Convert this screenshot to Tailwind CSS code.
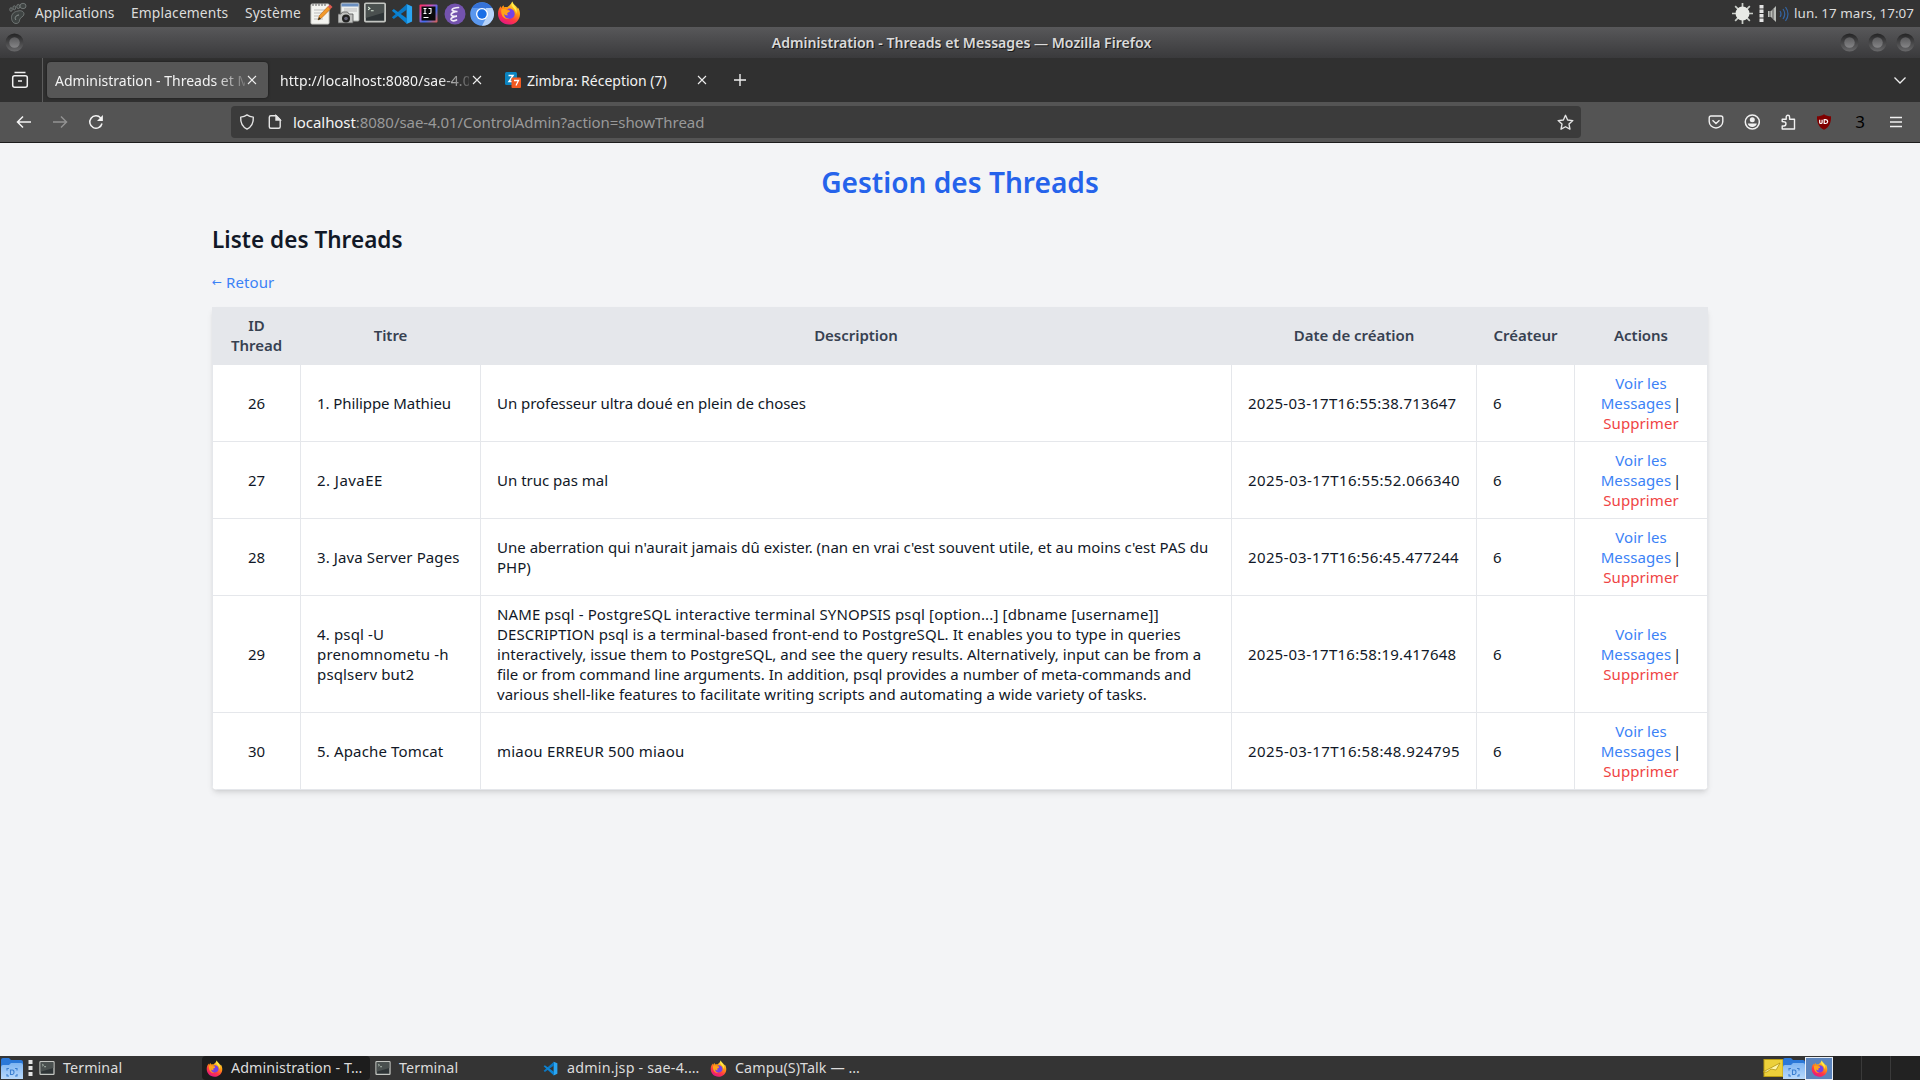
<!DOCTYPE html>
<html lang="fr">
<head>
<meta charset="utf-8">
<title>Administration - Threads et Messages</title>
<script src="https://cdn.jsdelivr.net/npm/@tailwindcss/browser@4"></script>
</head>
<body class="w-[1920px] h-[1080px] overflow-hidden flex flex-col bg-[#f3f4f6] font-['Noto_Sans',sans-serif]">

<svg width="0" height="0" class="absolute">
  <defs>
    <linearGradient id="ffg" x1=".8" y1="0" x2=".3" y2="1"><stop offset="0" stop-color="#fff44f"/><stop offset=".4" stop-color="#ff980e"/><stop offset=".7" stop-color="#ff3647"/><stop offset="1" stop-color="#e31587"/></linearGradient>
    <linearGradient id="ringg" x1="0" y1="0" x2="0" y2="1"><stop offset="0" stop-color="#232324"/><stop offset="1" stop-color="#68686a"/></linearGradient>
    <linearGradient id="dotg" x1="0" y1="0" x2="0" y2="1"><stop offset="0" stop-color="#5a5a5c"/><stop offset="1" stop-color="#858587"/></linearGradient>
    <linearGradient id="ijg" x1="0" y1="0" x2="1" y2="1"><stop offset="0" stop-color="#fe2857"/><stop offset=".35" stop-color="#c757bc"/><stop offset=".6" stop-color="#3b6cf4"/><stop offset="1" stop-color="#e8604c"/></linearGradient>
    <linearGradient id="foldg" x1="0" y1="0" x2="0" y2="1"><stop offset="0" stop-color="#7fb5f2"/><stop offset="1" stop-color="#b9d9fb"/></linearGradient>
  </defs>
  <symbol id="firefox" viewBox="0 0 24 24">
    <path d="M15.2.6c.6 1.6 1.500 2.600 3 3.900 1.300 1.100 1.900 2.100 2.100 3.200.300-.4.400-.9.400-1.400 1.600 2 2.300 4.300 2.300 6.600C23 19 18.200 23.600 12 23.600S1 19 1 12.800C1 9.800 2 7 3.800 5c0 .9.200 1.600.500 2 .500-1.200 1.300-2.200 2.300-2.800 0 .8.200 1.500.6 2 .9-.3 2-.3 2.900 0C11.400 5.300 14.200 3.800 15.200.6z" fill="url(#ffg)"/>
    <path d="M12.300 7.500c3 0 5.400 2.300 5.400 5.200s-2.400 5.100-5.400 5.100-5.500-2-5.500-4.800c0-1 .300-1.800.9-2.600 1 .7 2.100.9 3.300.5 1-.3 1.900-.8 1.700-1.300-.2-.5-1.500-.4-2.400-1 .5-.7 1.200-1.100 2-1.100z" fill="#7542e5"/>
    <path d="M4.300 8.300c1.900-.9 3.900-.6 5.200.6 1 .9 3.200.5 3.300 1.200.1.900-1.700 1.300-2.300 1.800-.6.500-.4 1.700.7 2.100-1.300.7-3.300.3-3.900-.9-.4 3 2.100 4.700 4.700 4.700-4.500 1-8.500-2.500-7.700-9.500z" fill="#ffa31a"/>
    <path d="M15.200.6c-1.100 2.500-.5 4.500 1.300 6.300 1.900 1.900 2.800 3.700 2.400 6.300 1.300-2.600.7-5-.4-6.700-1-1.600-2.900-2.900-3.300-5.900z" fill="#fff04a"/>
  </symbol>
  <symbol id="vscode" viewBox="0 0 24 24">
    <path d="M17 1l6 2.700v16.600L17 23z" fill="#2aa5f2"/>
    <path d="M17.500 1 1 15.500l2 1.900L17.500 7z" fill="#0b78c4"/><path d="M17.500 23 1 8.500l2-1.900L17.500 17z" fill="#0b83d3"/>
  </symbol>
  <symbol id="term" viewBox="0 0 24 22">
    <rect x="1" y="1" width="22" height="20" rx="1" fill="#2e3436" stroke="#c3c5c1" stroke-width="2"/>
    <path d="M2 2h20v9L2 17z" fill="#4a504f"/><path d="M4.500 5l2 1.500-2 1.500M7.500 9h3" stroke="#d8e8d8" stroke-width="1.100" fill="none"/>
  </symbol>
  <symbol id="folder" viewBox="0 0 22 23">
    <path d="M0 3q0-2 2-2h6l2 2h10q2 0 2 2v14H0z" fill="#2b78d8"/><path d="M0 10q0-2 2-2h6l2-2h10q2 0 2 2v14H0z" fill="url(#foldg)"/>
    <path d="M6 13.500v-2h2M14 11.500h2v2M16 17v2h-2M8 19H6v-2M9.500 13h2q1.500 0 1.500 2.200t-1.500 2.300h-2z" stroke="#3b7fd0" stroke-width="1.100" fill="none"/>
  </symbol>
  <symbol id="ring" viewBox="0 0 20 20"><circle cx="10" cy="10" r="9.500" fill="url(#ringg)"/><circle cx="10" cy="10" r="5.500" fill="url(#dotg)"/></symbol>
  <symbol id="x" viewBox="0 0 10 10"><path d="M1 1l8 8M9 1L1 9" stroke="#eee" stroke-width="1.100" fill="none"/></symbol>
</svg>

<!-- Desktop panel -->
<div class="h-[27px] shrink-0 bg-[#343434] flex items-center text-[#dcdcdc] text-[13.8px]">
  <svg class="w-[18px] h-[23px] ml-[9px]" viewBox="0 0 18 23"><g fill="#3f4443" stroke="#7b8280" stroke-width=".8"><path d="M9 9c3-1 6 .5 6 3 0 3-4 3-4.500 6 0 2-1 3.500-3.500 3.500-3 0-4.500-3-4.500-6C2.500 12 5 9.500 9 9z"/><ellipse cx="2" cy="7.500" rx="1.300" ry="1.800"/><ellipse cx="5.300" cy="5.800" rx="1.400" ry="2"/><ellipse cx="9.300" cy="4.500" rx="1.600" ry="2.100"/><ellipse cx="14" cy="4" rx="3" ry="2.700"/></g><path d="M7 18c-2-2 0-5 3-5" stroke="#8d9492" fill="none"/></svg>
  <span class="ml-2 w-[96px] shrink-0">Applications</span>
  <span class="w-[114px] shrink-0 tracking-[0.15px]">Emplacements</span>
  <span class="w-[65px] shrink-0 tracking-[0.2px]">Système</span>
  <svg class="w-[23px] h-[23px]" viewBox="0 0 23 23"><rect x="1" y="2" width="18" height="20" rx="1" fill="#f4f4f0" stroke="#c9c9c5"/><path d="M3 1v3M6 1v3M9 1v3M12 1v3M15 1v3" stroke="#777" stroke-width="1.200"/><path d="M4 8h11M4 11h9M4 14h6M4 17h9" stroke="#bbb"/><path d="M8 18l1.500-4.500 8.500-9 2.500 2.500-9 9z" fill="#f39a2b" stroke="#b05d10" stroke-width=".6"/><path d="M18 4.500l2-2 2.500 2.500-2 2z" fill="#e05a50"/><path d="M8 18l1-3 2 2z" fill="#332"/></svg>
  <svg class="w-[22px] h-[23px] ml-[5px]" viewBox="0 0 22 23"><rect x="3" y="1" width="18" height="18" rx="1" fill="#eceeec" stroke="#a9aca8"/><path d="M3.500 1.500h17v3h-17z" fill="#6a8fc0"/><path d="M6 7h13M6 9h13" stroke="#bbb"/><path d="M0 12h3l1.500-2h5l1.500 2h4v9H0z" fill="#bfc0be" stroke="#555" stroke-width=".8"/><circle cx="8" cy="16.500" r="4" fill="#222"/><circle cx="8" cy="16.500" r="1.800" fill="#667"/></svg>
  <svg class="w-[22px] h-[21px] ml-1 -mt-[2px]"><use href="#term"/></svg>
  <svg class="w-[22px] h-[22px] ml-[5px]"><use href="#vscode"/></svg>
  <svg class="w-[19px] h-[19px] ml-[6px]" viewBox="0 0 19 19"><rect x=".500" y=".500" width="18" height="18" rx="1" fill="url(#ijg)"/><rect x="2.500" y="2.500" width="14" height="14" fill="#0a0a0c"/><path d="M4.500 4.500h3M6 4.500v5M4.500 9.500h3M9.500 4.500h3M12 4.500v4q0 1-1.300 1h-1M4.500 13.500h5" stroke="#fff" stroke-width="1.100" fill="none"/></svg>
  <svg class="w-[22px] h-[22px] ml-[6px]" viewBox="0 0 22 22"><circle cx="11" cy="11" r="10.500" fill="#7453ae"/><path d="M14.500 4.500c-3 0-7 1-6.300 2.700.7 1.500 4 1.300 5.300 1.300-3 0-6.500 1.300-6.300 3.200.3 1.800 4 1.700 5.800 1.500-3 .5-6.500 1.500-6 3.300.7 1.500 3.500 1.300 5.500.5" fill="none" stroke="#f1ecf8" stroke-width="1.700" stroke-linecap="round"/></svg>
  <svg class="w-6 h-6 ml-[4px]" viewBox="0 0 24 24"><circle cx="12" cy="12" r="11.800" fill="#5a97ee"/><path d="M1.800 6A11.800 11.800 0 0 1 22.200 6H12z" fill="#3572d8"/><path d="M22.300 6A11.800 11.800 0 0 1 12 23.800l5-9.500L16 6z" fill="#b7d3fa"/><circle cx="12" cy="12" r="6" fill="#fff"/><circle cx="12" cy="12" r="4.700" fill="#1a6ee6"/></svg>
  <svg class="w-[24px] h-[24px] ml-[3px] -mt-px"><use href="#firefox"/></svg>
  <div class="ml-auto flex items-center">
    <svg class="w-[21px] h-[21px]" viewBox="0 0 22 22"><path d="M11 0v22M0 11h22M3.300 3.300l15.400 15.400M18.700 3.300L3.300 18.700" stroke="#c9cdc8" stroke-width="1.800"/><circle cx="11" cy="11" r="7.300" fill="#e8eae6"/></svg>
    <svg class="w-[5px] h-[17px] ml-[6px]" viewBox="0 0 5 17"><path d="M.500 0h4v3.500h-4zM.500 4.500h4V8h-4zM.500 9h4v3.500h-4zM.500 13.500h4V17h-4z" fill="#e4e4e4"/></svg>
    <svg class="w-[22px] h-[18px] ml-[3px]" viewBox="0 0 22 18"><path d="M1 6h3l5-5v16l-5-5H1z" fill="#b9bcb8"/><path d="M3 6v6M6 4v10" stroke="#555"/><path d="M13 6q2 3 0 6M16 4q3.500 5 0 10M18.500 2q5 7 0 14" stroke="#3465a4" stroke-width="1.200" fill="none"/></svg>
    <span class="ml-[5px] mr-[6px] text-[13.4px] tracking-[0.04px] whitespace-nowrap">lun. 17 mars, 17:07</span>
  </div>
</div>

<!-- Window title bar -->
<div class="h-[31px] shrink-0 bg-linear-to-b from-[#58585a] to-[#3a3a3c] flex items-center justify-between px-[5px] text-[#dadada]">
  <svg class="w-[19px] h-[19px] mr-[59px]"><use href="#ring"/></svg>
  <span class="text-[14.1px] font-semibold text-shadow-[1px_1px_0_#1a1a1a]">Administration - Threads et Messages — Mozilla Firefox</span>
  <div class="flex gap-[9px]"><svg class="w-[19px] h-[19px]"><use href="#ring"/></svg><svg class="w-[19px] h-[19px]"><use href="#ring"/></svg><svg class="w-[19px] h-[19px]"><use href="#ring"/></svg></div>
</div>

<!-- Tabs -->
<div class="h-[44px] shrink-0 bg-[#303030] flex items-center text-[14px] text-[#f2f2f2]">
  <svg class="w-[18px] h-[18px] ml-[11px]" viewBox="0 0 18 18" fill="none" stroke="#f0f0f0" stroke-width="1.500"><path d="M3.500 1.500h11M7 10h4"/><rect x="1.700" y="4.700" width="14.600" height="11.600" rx="2"/></svg>
  <div class="w-px h-full bg-[#5c5c5c] ml-[13px]"></div>
  <div class="w-[221px] h-9 ml-[4px] rounded bg-[#565656] shadow-[0_0_3px_#0008] flex items-center pl-2 pr-[11px]">
    <span class="w-[190px] overflow-hidden whitespace-nowrap [mask-image:linear-gradient(to_right,#000_84%,transparent_104%)]">Administration - Threads et Messages</span>
    <svg class="w-[10px] h-[10px] ml-[2px] shrink-0"><use href="#x"/></svg>
  </div>
  <span class="w-[189px] ml-[12px] overflow-hidden whitespace-nowrap tracking-[0.08px] [mask-image:linear-gradient(to_right,#000_84%,transparent_104%)]">http://localhost:8080/sae-4.01/</span>
  <svg class="w-[10px] h-[10px] ml-[3px] shrink-0"><use href="#x"/></svg>
  <svg class="w-[16px] h-[16px] ml-[23px] shrink-0" viewBox="0 0 16 16"><rect width="12" height="13" rx="1.500" fill="#0a84c1"/><path d="M3.500 3.500h4.500l-4 6h4" stroke="#fff" stroke-width="1.500" fill="none"/><rect x="6.500" y="5.500" width="9.500" height="10.500" rx="1" fill="#f15a22"/><path d="M9 8.500h4.500l-2.500 5" stroke="#fff" stroke-width="1.300" fill="none"/></svg>
  <span class="ml-[6px] w-[170px] whitespace-nowrap">Zimbra: Réception (7)</span>
  <svg class="w-[10px] h-[10px] shrink-0"><use href="#x"/></svg>
  <svg class="w-[14px] h-[14px] ml-[26px]" viewBox="0 0 14 14"><path d="M7 1v12M1 7h12" stroke="#eee" stroke-width="1.400"/></svg>
  <svg class="w-[14px] h-[14px] ml-auto mr-[13px]" viewBox="0 0 14 14"><path d="M1.500 4.500L7 10l5.500-5.500" stroke="#eee" stroke-width="1.300" fill="none"/></svg>
</div>

<!-- Navigation bar -->
<div class="h-[41px] shrink-0 bg-[#545454] border-b border-[#1c1c1c] flex items-center text-[15px]">
  <div class="flex items-center gap-[20px] ml-[16px]">
    <svg class="w-4 h-4" viewBox="0 0 16 16" fill="none" stroke="#f4f4f4" stroke-width="1.500"><path d="M15 8H1.500M7 2.500L1.500 8 7 13.500"/></svg>
    <svg class="w-4 h-4" viewBox="0 0 16 16" fill="none" stroke="#929292" stroke-width="1.500"><path d="M1 8h13.500M9 2.500L14.500 8 9 13.500"/></svg>
    <svg class="w-4 h-4" viewBox="0 0 16 16"><path d="M14 9.500A6.200 6.200 0 1 1 12.700 4" fill="none" stroke="#f4f4f4" stroke-width="1.500"/><path d="M14.900 1v6H9z" fill="#f4f4f4"/></svg>
  </div>
  <div class="w-[1350px] h-8 ml-[127px] rounded bg-[#3b3b3b] flex items-center pl-2 pr-[7px]">
    <svg class="w-4 h-4" viewBox="0 0 16 16" fill="none" stroke="#e4e4e4" stroke-width="1.400"><path d="M8 .9c2 1.500 4 2 6.300 2.200.3 5-1.300 9.500-6.300 12C3 12.600 1.400 8.100 1.700 3.100 4 2.900 6 2.400 8 .9z" stroke-linejoin="round"/></svg>
    <svg class="w-4 h-4 ml-[12px]" viewBox="0 0 16 16" fill="none" stroke="#e4e4e4" stroke-width="1.400"><path d="M3.800 1.700h5.400l4 4v7.100q0 1.500-1.500 1.500H3.800q-1.500 0-1.500-1.500V3.200q0-1.500 1.500-1.500z"/><path d="M9 1.700V6h4.200z" fill="#e4e4e4"/></svg>
    <span class="ml-[10px] text-[#999] tracking-[-0.06px]"><span class="text-[#f4f4f4]">localhost</span>:8080/sae-4.01/ControlAdmin?action=showThread</span>
    <svg class="w-[17px] h-[17px] ml-auto" viewBox="0 0 16 16"><path d="M8 1.200l2 4.400 4.900.6-3.600 3.300.9 4.800L8 12l-4.200 2.300.9-4.800L1.100 6.200 6 5.600z" fill="none" stroke="#e4e4e4" stroke-width="1.300" stroke-linejoin="round"/></svg>
  </div>
  <div class="ml-auto mr-[16px] flex items-center gap-[20px]">
    <svg class="w-4 h-4" viewBox="0 0 16 16" fill="none" stroke="#f0f0f0" stroke-width="1.400"><path d="M3 2h10q1.800 0 1.800 1.800V7.500a6.800 6.500 0 0 1-13.600 0V3.800Q1.200 2 3 2zM4.500 6.200L8 9.500l3.500-3.300"/></svg>
    <svg class="w-4 h-4" viewBox="0 0 16 16"><circle cx="8.300" cy="8" r="7" fill="none" stroke="#f0f0f0" stroke-width="1.500"/><circle cx="8.300" cy="5.800" r="2.500" fill="#f0f0f0"/><path d="M3.800 9.500h9c-.3 2-2.300 3.500-4.500 3.500s-4.200-1.500-4.500-3.500z" fill="#f0f0f0"/></svg>
    <svg class="w-4 h-4" viewBox="0 0 16 16" fill="none" stroke="#f0f0f0" stroke-width="1.400"><path d="M2.200 7.500V5.200h4V3a1.700 1.700 0 0 1 3.400 0v2.200h4.900V15H2.200v-3h1.600a2 2 0 0 0 0-4.300z" stroke-linejoin="round"/></svg>
    <svg class="w-4 h-4" viewBox="0 0 16 16"><path d="M8 .3c2 1.500 4.500 2 7 2 .3 6-1.500 11-7 13.500C2.500 13.300.7 8.300 1 2.300c2.500 0 5-.5 7-2z" fill="#800000"/><path d="M3.700 5.700v2.800q0 1 1.200 1t1.200-1V5.700M8.200 5.700v3.800h1.500q2-.2 2-1.900t-2-1.900z" stroke="#fff" stroke-width="1.200" fill="none"/></svg>
    <span class="w-4 text-center text-[17px] leading-4 text-black">3</span>
    <svg class="w-4 h-4" viewBox="0 0 16 16"><path d="M2 3.500h12M2 8h12M2 12.500h12" stroke="#f0f0f0" stroke-width="1.400"/></svg>
  </div>
</div>

<!-- Page -->
<main class="flex-1 min-h-0 text-[#111827] text-[15px] leading-5 px-[212px] pt-5">
  <h1 class="text-center text-[28.1px] leading-[38px] font-semibold text-[#2563eb]">Gestion des Threads</h1>
  <h2 class="mt-[24px] text-[22.5px] leading-[30px] font-semibold tracking-[0.03px]">Liste des Threads</h2>
  <a class="mt-[17px] mb-[15px] flex items-center text-[#3b82f6]"><span class="w-[14px] text-[12px] font-['DejaVu_Sans',sans-serif]">←</span><span class="tracking-[0.1px]">Retour</span></a>
  <div class="rounded-b-[5px] overflow-hidden shadow-md bg-white">
    <table class="w-[1496px] table-fixed border-collapse
      [&_td]:border [&_td]:border-[#e5e7eb] [&_td]:px-4 [&_td]:py-2 [&_td]:whitespace-nowrap
      [&_th]:border [&_th]:border-[#e5e7eb] [&_th]:bg-[#e5e7eb] [&_th]:px-4 [&_th]:pt-[7px] [&_th]:pb-[9px] [&_th]:font-semibold [&_th]:text-[#374151] [&_th]:tracking-[-0.03px]">
      <colgroup><col class="w-[88px]"><col class="w-[180px]"><col class="w-[751px]"><col class="w-[245px]"><col class="w-[98px]"><col class="w-[133px]"></colgroup>
      <thead><tr><th>ID<br>Thread</th><th>Titre</th><th>Description</th><th>Date de création</th><th>Créateur</th><th>Actions</th></tr></thead>
      <tbody>
        <tr><td class="text-center">26</td><td><span class="tracking-[-0.08px]">1. Philippe Mathieu</span></td><td><span class="tracking-[-0.05px]">Un professeur ultra doué en plein de choses</span></td><td class="tracking-[0.26px]">2025-03-17T16:55:38.713647</td><td>6</td><td class="text-center"><a class="text-[#3b82f6]">Voir les<br><span class="tracking-[0.1px]">Messages</span></a><span class="[word-spacing:-2px]"> |</span><br><a class="text-[#ef4444] tracking-[0.08px]">Supprimer</a></td></tr>
        <tr><td class="text-center">27</td><td><span class="tracking-[0.45px]">2. JavaEE</span></td><td>Un truc pas mal</td><td class="tracking-[0.4px]">2025-03-17T16:55:52.066340</td><td>6</td><td class="text-center"><a class="text-[#3b82f6]">Voir les<br><span class="tracking-[0.1px]">Messages</span></a><span class="[word-spacing:-2px]"> |</span><br><a class="text-[#ef4444] tracking-[0.08px]">Supprimer</a></td></tr>
        <tr><td class="text-center">28</td><td><span class="tracking-[0.11px]">3. Java Server Pages</span></td><td><span class="tracking-[0.015px]">Une aberration qui n'aurait jamais dû exister. (nan en vrai c'est souvent utile, et au moins c'est PAS du<br>PHP)</span></td><td class="tracking-[0.36px]">2025-03-17T16:56:45.477244</td><td>6</td><td class="text-center"><a class="text-[#3b82f6]">Voir les<br><span class="tracking-[0.1px]">Messages</span></a><span class="[word-spacing:-2px]"> |</span><br><a class="text-[#ef4444] tracking-[0.08px]">Supprimer</a></td></tr>
        <tr><td class="text-center">29</td><td><span class="tracking-[0.15px]">4. psql -U<br>prenomnometu -h<br>psqlserv but2</span></td><td><span class="tracking-[0.14px]">NAME psql - PostgreSQL interactive terminal SYNOPSIS psql [option...] [dbname [username]]</span><br><span class="tracking-[0.07px]">DESCRIPTION psql is a terminal-based front-end to PostgreSQL. It enables you to type in queries</span><br><span class="tracking-[0.03px]">interactively, issue them to PostgreSQL, and see the query results. Alternatively, input can be from a</span><br><span class="tracking-[-0.015px]">file or from command line arguments. In addition, psql provides a number of meta-commands and</span><br><span class="tracking-[0.04px]">various shell-like features to facilitate writing scripts and automating a wide variety of tasks.</span></td><td class="tracking-[0.26px]">2025-03-17T16:58:19.417648</td><td>6</td><td class="text-center"><a class="text-[#3b82f6]">Voir les<br><span class="tracking-[0.1px]">Messages</span></a><span class="[word-spacing:-2px]"> |</span><br><a class="text-[#ef4444] tracking-[0.08px]">Supprimer</a></td></tr>
        <tr><td class="text-center">30</td><td><span class="tracking-[0.15px]">5. Apache Tomcat</span></td><td><span class="tracking-[0.23px]">miaou ERREUR 500 miaou</span></td><td class="tracking-[0.4px]">2025-03-17T16:58:48.924795</td><td>6</td><td class="text-center"><a class="text-[#3b82f6]">Voir les<br><span class="tracking-[0.1px]">Messages</span></a><span class="[word-spacing:-2px]"> |</span><br><a class="text-[#ef4444] tracking-[0.08px]">Supprimer</a></td></tr>
      </tbody>
    </table>
  </div>
</main>

<!-- Taskbar -->
<div class="h-6 shrink-0 bg-[#343434] flex items-center text-[14.3px] text-[#dcdcdc] whitespace-nowrap">
  <svg class="w-[22px] h-[23px] ml-px"><use href="#folder"/></svg>
  <svg class="w-[5px] h-[16px] ml-[5px]" viewBox="0 0 5 16"><path d="M.500 0h4v4h-4zM.500 6h4v4h-4zM.500 12h4v4h-4z" fill="#e4e4e4"/></svg>
  <div class="flex items-center w-[163px] ml-[6px]"><svg class="w-[16px] h-[14px]"><use href="#term"/></svg><span class="ml-2 tracking-[0.08px]">Terminal</span></div>
  <div class="flex items-center w-[168px] h-full rounded bg-[#1d1d1d] pl-[4px]"><svg class="w-[17px] h-[17px]"><use href="#firefox"/></svg><span class="ml-[8px] tracking-[0.08px]">Administration - T…</span></div>
  <div class="flex items-center w-[168px] pl-[5px]"><svg class="w-[16px] h-[14px]"><use href="#term"/></svg><span class="ml-2 tracking-[0.08px]">Terminal</span></div>
  <div class="flex items-center w-[168px] pl-[5px]"><svg class="w-[15px] h-[15px]"><use href="#vscode"/></svg><span class="ml-[9px] tracking-[0.2px]">admin.jsp - sae-4.…</span></div>
  <div class="flex items-center w-[168px] pl-[4px]"><svg class="w-[17px] h-[17px]"><use href="#firefox"/></svg><span class="ml-[8px] tracking-[0.08px]">Campu(S)Talk — …</span></div>
  <div class="ml-auto flex items-center h-full">
    <svg class="w-5 h-[18px]" viewBox="0 0 20 18"><rect x="1" y=".500" width="19" height="17" fill="#ecd03a" stroke="#b99b10"/><path d="M0 13L17 4l-4 7-5-1-4 3z" fill="#fff6a8" stroke="#a98a08" stroke-width=".700"/></svg>
    <svg class="w-[22px] h-[23px]"><use href="#folder"/></svg>
    <div class="w-[28px] h-[23px] bg-[#5b84bd] border border-[#e8eef6] flex items-center justify-center"><svg class="w-[17px] h-[17px]"><use href="#firefox"/></svg></div>
    <div class="w-[29px] h-full bg-[#222] border-r border-[#3a3a3a]"></div><div class="w-[29px] h-full bg-[#222] border-r border-[#3a3a3a]"></div><div class="w-[29px] h-full bg-[#222]"></div>
  </div>
</div>
</body>
</html>
